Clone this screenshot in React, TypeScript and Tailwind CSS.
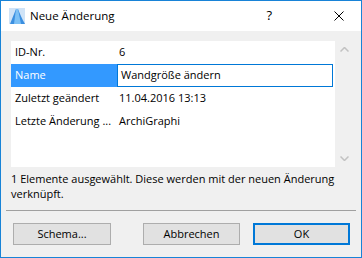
import React from "react";

const rows = [
  { label: "ID-Nr.", value: "6" },
  { label: "Name", value: "Wandgröße ändern", editing: true },
  { label: "Zuletzt geändert", value: "11.04.2016 13:13" },
  { label: "Letzte Änderung ...", value: "ArchiGraphi" },
];

function AppIcon() {
  return (
    <svg width="16" height="16" viewBox="0 0 16 16">
      <rect x="0" y="0" width="16" height="16" fill="#cfe3f7" />
      <path d="M1 16 L7 1 L9 1 C11 6 13 11 16 16 Z" fill="#3b8fe0" />
      <path d="M7 1 L9 1 C10 6 11 11 12 16 L5 16 Z" fill="#7cc0f5" />
    </svg>
  );
}

export default function App() {
  return (
    <div
      className="w-[362px] h-[258px] border border-[#1883d7] bg-[#f0f0f0] flex flex-col text-[11px] text-black"
      style={{ fontFamily: '"Open Sans", "Noto Sans", sans-serif' }}
    >
      {/* title bar */}
      <div className="h-[30px] bg-white flex items-center pl-[8px] shrink-0">
        <AppIcon />
        <span className="ml-[5px] text-[11.5px]">Neue Änderung</span>
        <span className="ml-auto mr-[62px] text-[13px]">?</span>
        <svg width="10" height="10" viewBox="0 0 10 10" className="mr-[17px]">
          <path d="M0.5 0.5 L9.5 9.5 M9.5 0.5 L0.5 9.5" stroke="#000" strokeWidth="1" />
        </svg>
      </div>

      {/* list */}
      <div className="mt-[10px] ml-[10px] mr-[8px] flex h-[126px]">
        <div className="w-[324px] bg-white flex flex-col">
          {rows.map((r) =>
            r.editing ? (
              <div key={r.label} className="h-[23px] flex">
                <div className="w-[106px] bg-[#3399ff] text-white pl-[4px] flex items-center">{r.label}</div>
                <div className="w-[216px] border border-[#0078d7] bg-white pl-[3px] flex items-center">{r.value}</div>
              </div>
            ) : (
              <div key={r.label} className="h-[23px] flex items-center whitespace-nowrap">
                <div className="w-[108px] pl-[4px]">{r.label}</div>
                <div>{r.value}</div>
              </div>
            )
          )}
        </div>
        <div className="flex-1 flex flex-col items-center justify-between py-[6px]">
          <svg width="9" height="5" viewBox="0 0 9 5">
            <path d="M0.5 4.5 L4.5 0.5 L8.5 4.5" stroke="#c2c2c2" strokeWidth="1.5" fill="none" />
          </svg>
          <svg width="9" height="5" viewBox="0 0 9 5">
            <path d="M0.5 0.5 L4.5 4.5 L8.5 0.5" stroke="#c2c2c2" strokeWidth="1.5" fill="none" />
          </svg>
        </div>
      </div>

      {/* message */}
      <p className="mx-[10px] mt-[4px] leading-[15px]">
        1 Elemente ausgewählt. Diese werden mit der neuen Änderung verknüpft.
      </p>

      {/* separator */}
      <div className="mt-auto mx-[5px] h-px bg-[#a0a0a0]" />

      {/* buttons */}
      <div className="flex items-center pl-[12px] pr-[11px] mt-[12px] mb-[12px]">
        <button className="w-[98px] h-[22px] bg-[#e1e1e1] border border-[#adadad]">Schema...</button>
        <button className="ml-[32px] w-[97px] h-[22px] bg-[#e1e1e1] border border-[#adadad]">Abbrechen</button>
        <button className="ml-[13px] w-[97px] h-[22px] bg-[#e1e1e1] border-2 border-[#0078d7]">OK</button>
      </div>
    </div>
  );
}
